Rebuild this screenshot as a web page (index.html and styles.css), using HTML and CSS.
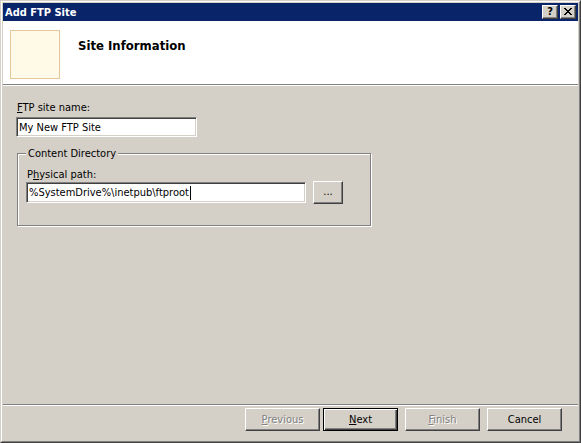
FILE: index.html
```html
<!DOCTYPE html>
<html>
<head>
<meta charset="utf-8">
<title>Add FTP Site</title>
<link rel="stylesheet" href="styles.css">
</head>
<body>
<div class="window">
  <div class="frame">
    <div class="titlebar">
      <span class="title">Add FTP Site</span>
      <div class="cap-btns">
        <div class="cap cap-help">?</div>
        <div class="cap cap-close">
          <svg width="8" height="7" viewBox="0 0 8 7" shape-rendering="crispEdges">
            <path d="M0 0h2v1h-2z M6 0h2v1h-2z M1 1h2v1h-2z M5 1h2v1h-2z M2 2h4v1h-4z M3 3h2v1h-2z M2 4h4v1h-4z M1 5h2v1h-2z M5 5h2v1h-2z M0 6h2v1h-2z M6 6h2v1h-2z" fill="#000"/>
          </svg>
        </div>
      </div>
    </div>
    <div class="header">
      <div class="header-icon"></div>
      <div class="header-title">Site Information</div>
    </div>
    <div class="content">
      <div class="label label-top"><u>F</u>TP site name:</div>
      <div class="textbox textbox-name">My New FTP Site</div>
      <div class="group">
        <div class="legend">Content Directory</div>
        <div class="label">P<u>h</u>ysical path:</div>
        <div class="path-row">
          <div class="textbox textbox-path">%SystemDrive%\inetpub\ftproot<span class="caret"></span></div>
          <div class="btn btn-browse">...</div>
        </div>
      </div>
    </div>
    <div class="footer">
      <div class="btn btn-wide disabled"><span class="btn-text"><u>P</u>revious</span></div>
      <div class="btn btn-wide default"><span class="btn-text"><u>N</u>ext</span></div>
      <div class="btn btn-wide disabled btn-gap"><span class="btn-text"><u>F</u>inish</span></div>
      <div class="btn btn-wide btn-gap"><span class="btn-text">Cancel</span></div>
    </div>
  </div>
</div>
</body>
</html>
```
FILE: styles.css
```css
html, body {
  margin: 0;
  padding: 0;
  background: #d4d0c8;
}

body {
  font-family: "DejaVu Sans Condensed", "Liberation Sans", sans-serif;
  font-size: 11px;
  color: #000;
}

.window {
  width: 581px;
  height: 443px;
  box-sizing: border-box;
  border: 1px solid;
  border-color: #d4d0c8 #404040 #404040 #d4d0c8;
}

.frame {
  height: 100%;
  box-sizing: border-box;
  border: 1px solid;
  border-color: #ffffff #808080 #808080 #ffffff;
  padding: 1px;
  display: flex;
  flex-direction: column;
  background: #d4d0c8;
}

.titlebar {
  height: 18px;
  flex: none;
  background: #0a246a;
  display: flex;
  align-items: center;
  padding: 0 2px 0 2px;
}

.title {
  flex: 1;
  color: #fff;
  font-weight: bold;
  font-size: 11px;
  line-height: 13px;
}

.cap-btns {
  display: flex;
  gap: 2px;
}

.cap {
  width: 16px;
  height: 14px;
  box-sizing: border-box;
  border: 1px solid;
  border-color: #ffffff #404040 #404040 #ffffff;
  box-shadow: inset -1px -1px 0 #808080;
  background: #d4d0c8;
  display: flex;
  align-items: center;
  justify-content: center;
}

.cap-help {
  font-weight: bold;
  font-size: 11px;
  line-height: 11px;
  padding-bottom: 1px;
}

.cap-close svg {
  display: block;
  margin-bottom: 1px;
}

.header {
  height: 63px;
  flex: none;
  background: #fff;
  border-bottom: 1px solid #808080;
  display: flex;
  align-items: flex-start;
}

.header-icon {
  width: 50px;
  height: 49px;
  box-sizing: border-box;
  margin: 9px 0 0 7px;
  border: 1px solid #e6c79c;
  background: #fff9e8;
}

.header-title {
  margin: 17px 0 0 18px;
  font-weight: bold;
  font-size: 13px;
  line-height: 16px;
}

.content {
  flex: 1;
  border-top: 1px solid #fff;
  padding: 15px 13px 0 13px;
}

.label {
  line-height: 13px;
}

.label-top {
  margin-left: 1px;
}

.textbox {
  box-sizing: border-box;
  background: #fff;
  border: 1px solid;
  border-color: #808080 #ffffff #ffffff #808080;
  box-shadow: inset 1px 1px 0 #404040, inset -1px -1px 0 #d4d0c8;
  padding: 0 2px;
  display: flex;
  align-items: center;
  white-space: nowrap;
  line-height: 13px;
}

.textbox-name {
  width: 181px;
  height: 20px;
  margin-top: 3px;
}

.group {
  position: relative;
  width: 354px;
  height: 73px;
  box-sizing: border-box;
  margin: 16px 0 0 1px;
  border: 1px solid #808080;
  box-shadow: inset 1px 1px 0 #fff, 1px 1px 0 #fff;
  padding: 14px 8px 0 8px;
}

.legend {
  position: absolute;
  top: -7px;
  left: 8px;
  padding: 0 2px;
  background: #d4d0c8;
  line-height: 13px;
}

.group .label {
  margin-left: 1px;
}

.path-row {
  display: flex;
  align-items: center;
  gap: 7px;
  margin-top: 0;
}

.textbox-path {
  width: 280px;
  height: 21px;
}

.caret {
  display: inline-block;
  width: 1px;
  height: 14px;
  background: #000;
  margin-left: 1px;
}

.btn {
  box-sizing: border-box;
  background: #d4d0c8;
  border: 1px solid;
  border-color: #ffffff #404040 #404040 #ffffff;
  box-shadow: inset -1px -1px 0 #808080;
  display: flex;
  align-items: center;
  justify-content: center;
  line-height: 13px;
}

.btn-browse {
  width: 30px;
  height: 23px;
  padding-bottom: 2px;
}

.footer {
  flex: none;
  border-top: 1px solid #808080;
  box-shadow: inset 0 1px 0 #fff;
  padding: 3px 16px 9px 0;
  display: flex;
  justify-content: flex-end;
  gap: 3px;
}

.btn-wide {
  width: 75px;
  height: 23px;
}

.btn-gap {
  margin-left: 4px;
}

.default {
  border: 1px solid #000;
  box-shadow: inset 1px 1px 0 #fff, inset -1px -1px 0 #404040, inset -2px -2px 0 #808080;
}

.disabled .btn-text {
  color: #808080;
  text-shadow: 1px 1px 0 #fff;
}
```
